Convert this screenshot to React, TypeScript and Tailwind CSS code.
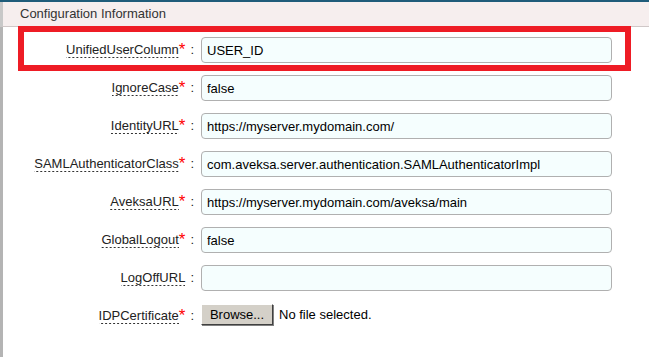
import React from "react";

type Field = {
  label: string;
  required: boolean;
  value?: string;
  file?: boolean;
};

const FIELDS: Field[] = [
  { label: "UnifiedUserColumn", required: true, value: "USER_ID" },
  { label: "IgnoreCase", required: true, value: "false" },
  { label: "IdentityURL", required: true, value: "https://myserver.mydomain.com/" },
  {
    label: "SAMLAuthenticatorClass",
    required: true,
    value: "com.aveksa.server.authentication.SAMLAuthenticatorImpl",
  },
  { label: "AveksaURL", required: true, value: "https://myserver.mydomain.com/aveksa/main" },
  { label: "GlobalLogout", required: true, value: "false" },
  { label: "LogOffURL", required: false, value: "" },
  { label: "IDPCertificate", required: true, file: true },
];

export default function App() {
  return (
    <div className="relative h-[358px] w-[649px] overflow-hidden bg-white font-['Liberation_Sans',Arial,sans-serif] text-[13px] text-[#222]">
      <div className="border-t-2 border-[#1f5c7a]">
        <div className="flex h-[25px] items-center border-b border-l-[3px] border-b-[#cfc7c7] border-l-[#c8c8c8] bg-[#f6eeee] pl-[17px] text-[13px] text-[#333]">
          Configuration Information
        </div>
      </div>

      <div className="h-[330px] border-l-[3px] border-[#b4b4b4] pt-[4px]">
        {FIELDS.map((f) => (
          <div key={f.label} className="flex h-[38px] items-center">
            <div className="flex w-[198px] shrink-0 items-center justify-end pr-[7px]">
              <span className="bg-[linear-gradient(to_right,#333_50%,transparent_50%)] bg-[length:4px_1px] bg-bottom bg-repeat-x pb-[1px] leading-[15px]">
                {f.label}
              </span>
              {f.required && (
                <span className="-mt-[2px] text-[17px] leading-[15px] text-[#ff0000]">*</span>
              )}
              <span className="ml-[5px]">:</span>
            </div>
            {f.file ? (
              <div className="-mt-[3px] flex items-center">
                <button className="h-[21px] w-[72px] border border-b-[#404040] border-l-white border-r-[#404040] border-t-white bg-[#d4d0c8] text-[13px] text-black shadow-[1px_1px_0_#808080]">
                  Browse...
                </button>
                <span className="ml-[6px] text-black">No file selected.</span>
              </div>
            ) : (
              <input
                readOnly
                value={f.value}
                className="h-[26px] w-[411px] rounded-[4px] border border-[#b0b0b0] bg-[#f5fefe] px-[5px] text-[13px] text-black outline-none"
              />
            )}
          </div>
        ))}
      </div>

      <div className="pointer-events-none absolute left-[18px] top-[26px] h-[45px] w-[613px] border-[6px] border-[#ee1c25]" />
    </div>
  );
}
